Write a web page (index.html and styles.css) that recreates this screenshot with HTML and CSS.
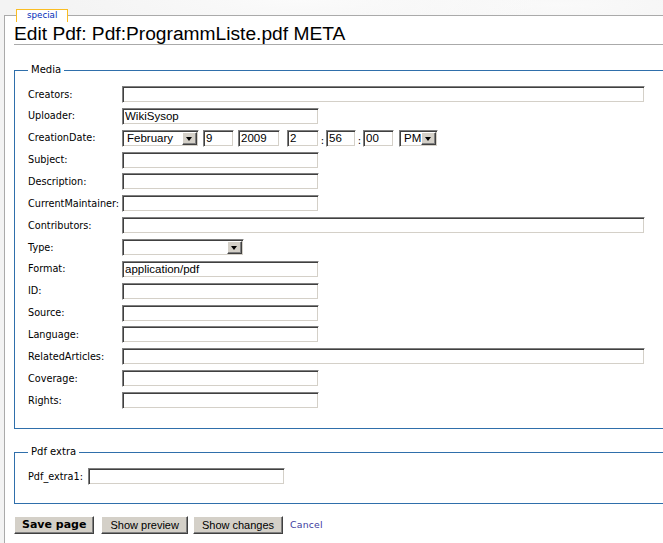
FILE: index.html
```html
<!DOCTYPE html>
<html lang="de">
<head>
<meta charset="utf-8">
<title>Edit Pdf: Pdf:ProgrammListe.pdf META</title>
<link rel="stylesheet" href="styles.css">
</head>
<body>
<div class="tabs"><span class="tab">special</span></div>
<div class="content">
  <h1 class="title">Edit Pdf: Pdf:ProgrammListe.pdf META</h1>
  <form class="editform">
    <fieldset class="group media">
      <legend>Media</legend>
      <div class="fields">
        <label>Creators:</label><input class="field wide" type="text" value="">
        <label>Uploader:</label><input class="field" type="text" value="WikiSysop">
        <label>CreationDate:</label>
        <div class="daterow">
          <span class="select month"><select class="sel-native"><option>February</option></select><span class="sel-btn"></span></span>
          <input class="field day" type="text" value="9">
          <input class="field year" type="text" value="2009">
          <input class="field hour" type="text" value="2">
          <span class="colon">:</span>
          <input class="field minute" type="text" value="56">
          <span class="colon">:</span>
          <input class="field second" type="text" value="00">
          <span class="select ampm"><select class="sel-native"><option>PM</option></select><span class="sel-btn"></span></span>
        </div>
        <label>Subject:</label><input class="field" type="text" value="">
        <label>Description:</label><input class="field" type="text" value="">
        <label>CurrentMaintainer:</label><input class="field" type="text" value="">
        <label>Contributors:</label><input class="field wide" type="text" value="">
        <label>Type:</label>
        <span class="select type"><select class="sel-native"><option></option></select><span class="sel-btn"></span></span>
        <label>Format:</label><input class="field" type="text" value="application/pdf">
        <label>ID:</label><input class="field" type="text" value="">
        <label>Source:</label><input class="field" type="text" value="">
        <label>Language:</label><input class="field" type="text" value="">
        <label>RelatedArticles:</label><input class="field wide" type="text" value="">
        <label>Coverage:</label><input class="field" type="text" value="">
        <label>Rights:</label><input class="field" type="text" value="">
      </div>
    </fieldset>
    <fieldset class="group extra">
      <legend>Pdf extra</legend>
      <div class="fields auto">
        <label>Pdf_extra1:</label><input class="field" type="text" value="">
      </div>
    </fieldset>
    <div class="actions">
      <button type="button" class="btn save">Save page</button>
      <button type="button" class="btn preview">Show preview</button>
      <button type="button" class="btn changes">Show changes</button>
      <a class="cancel" href="#">Cancel</a>
    </div>
  </form>
</div>
</body>
</html>
```
FILE: styles.css
```css
html, body {
  margin: 0;
  padding: 0;
  overflow: hidden;
}
body {
  background: #f3f3f3;
  background-image: radial-gradient(ellipse 260px 40px at 300px 0px, #fbfbfb 0%, rgba(251,251,251,0) 100%),
                    radial-gradient(ellipse 220px 30px at 560px 5px, #fafafa 0%, rgba(250,250,250,0) 100%);
  font-family: "DejaVu Sans", Verdana, sans-serif;
  color: #000;
}
.tabs {
  margin-top: 3px;
  height: 12px;
  padding-left: 16px;
}
.tab {
  display: inline-block;
  box-sizing: border-box;
  height: 13px;
  padding: 0 10px;
  border: 1px solid #fabd23;
  border-bottom: none;
  background: #fff;
  color: #002bb8;
  font: 8.7px/11px "DejaVu Sans", Verdana, sans-serif;
  position: relative;
  z-index: 1;
}
.content {
  margin-left: 4px;
  width: 720px;
  background: #fff;
  border-top: 1px solid #aaa;
  border-left: 1px solid #aaa;
  padding: 0 0 40px 9px;
}
.title {
  margin: 8px 0 0;
  padding: 0;
  font: normal 19.2px/20px "Liberation Sans", Arial, sans-serif;
  border-bottom: 1px solid #aaa;
}
.editform {
  margin: 0;
}
.group {
  margin: 19px 0 0;
  border: 1px solid #2f6fab;
  padding: 10px 13px 19px;
}
.group.extra {
  margin-top: 17px;
  padding-bottom: 18px;
}
.group legend {
  padding: 0 3px;
  font: 10px/12px "DejaVu Sans", Verdana, sans-serif;
}
.fields {
  display: grid;
  grid-template-columns: 94px auto;
  row-gap: 4.86px;
  align-items: center;
  justify-items: start;
}
.fields.auto {
  grid-template-columns: max-content auto;
  column-gap: 5px;
}
.fields label {
  font: 9.7px/12px "DejaVu Sans", Verdana, sans-serif;
  white-space: nowrap;
}
.field {
  box-sizing: border-box;
  width: 197px;
  height: 17px;
  margin: 0;
  padding: 0 2px;
  border: 1px solid;
  border-color: #808080 #fff #fff #808080;
  box-shadow: inset 1px 1px 0 #404040, inset -1px -1px 0 #d4d0c8;
  background: #fff;
  font: 11.5px/13px "Liberation Sans", Arial, sans-serif;
  color: #000;
  outline: none;
}
.field.wide { width: 523px; }
.daterow {
  display: flex;
  align-items: stretch;
}
.field.day { width: 31px; margin-left: 4px; }
.field.year { width: 42px; margin-left: 4px; }
.field.hour { width: 32px; margin-left: 7px; }
.field.minute { width: 30px; }
.field.second { width: 31px; }
.colon {
  width: 7px;
  text-align: center;
  font: 10px/12px "DejaVu Sans", Verdana, sans-serif;
  align-self: flex-end;
}
.select {
  box-sizing: border-box;
  display: inline-flex;
  height: 17px;
  border: 1px solid;
  border-color: #808080 #fff #fff #808080;
  box-shadow: inset 1px 1px 0 #404040, inset -1px -1px 0 #d4d0c8;
  padding: 1px;
  background: #fff;
}
.select.month { width: 77px; }
.select.type { width: 122px; }
.select.ampm { width: 39px; margin-left: 5px; }
.sel-native {
  appearance: none;
  -webkit-appearance: none;
  flex: 1;
  min-width: 0;
  border: none;
  margin: 0;
  padding: 0 0 0 3px;
  background: transparent;
  font: 11.5px/13px "Liberation Sans", Arial, sans-serif;
  color: #000;
  outline: none;
}
.sel-btn {
  box-sizing: border-box;
  width: 15px;
  height: 13px;
  background: #d4d0c8;
  border: 1px solid;
  border-color: #fff #404040 #404040 #fff;
  box-shadow: inset -1px -1px 0 #808080;
  display: flex;
  align-items: center;
  justify-content: center;
}
.sel-btn::after {
  content: "";
  width: 0;
  height: 0;
  border-left: 3.5px solid transparent;
  border-right: 3.5px solid transparent;
  border-top: 4px solid #000;
  margin: 1px 1px 0 0;
}
.actions {
  display: flex;
  align-items: center;
  margin-top: 12px;
}
.btn {
  box-sizing: border-box;
  height: 18px;
  margin: 0;
  padding: 0 8px;
  background: #d4d0c8;
  border: 1px solid;
  border-color: #fff #404040 #404040 #fff;
  box-shadow: inset -1px -1px 0 #808080;
  color: #000;
  font: 11px/14px "Liberation Sans", Arial, sans-serif;
}
.btn.save {
  padding: 0 7px;
  margin-right: 7px;
  font: bold 11px/14px "DejaVu Sans", Verdana, sans-serif;
}
.btn.preview { margin-right: 5px; padding: 0 8px; }
.btn.changes { margin-right: 7px; }
.cancel {
  color: #3d3a9e;
  text-decoration: none;
  font: 9.3px/12px "DejaVu Sans", Verdana, sans-serif;
  letter-spacing: 0.2px;
}
```
